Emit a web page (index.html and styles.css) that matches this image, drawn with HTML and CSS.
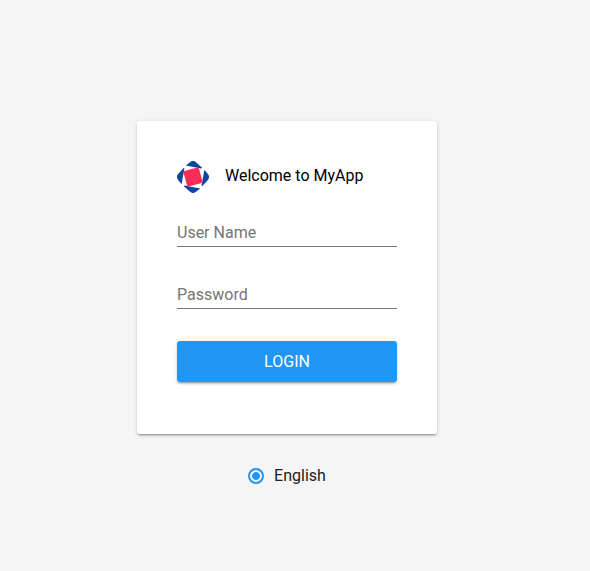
FILE: index.html
```html
<!DOCTYPE html>
<html lang="en">
<head>
<meta charset="utf-8">
<title>MyApp</title>
<link rel="stylesheet" href="styles.css">
</head>
<body>
<main class="page">
  <form class="card">
    <header class="brand">
      <svg class="logo" viewBox="0 0 32 32" aria-hidden="true">
        <g fill="#0d47a1">
          <path id="wing" d="M8.800 4.600 L13.300 .9 Q16 -1 18.700 .9 L24.900 6.600 Q25.200 7.600 24.200 7.400 Z"/>
          <use href="#wing" transform="rotate(90 16 16)"/>
          <use href="#wing" transform="rotate(180 16 16)"/>
          <use href="#wing" transform="rotate(270 16 16)"/>
        </g>
        <rect x="8" y="8" width="16" height="16" rx="2" fill="#fa2b56" transform="rotate(-15 16 16)"/>
      </svg>
      <h1 class="title">Welcome to MyApp</h1>
    </header>
    <input class="field" type="text" placeholder="User Name" aria-label="User Name">
    <input class="field" type="password" placeholder="Password" aria-label="Password">
    <button class="login" type="button">LOGIN</button>
  </form>
  <label class="language"><input class="radio" type="radio" checked><span>English</span></label>
</main>
</body>
</html>
```
FILE: styles.css
```css
* { box-sizing: border-box; }
body { margin: 0; background: #f5f5f5; font: 16px/24px Roboto, sans-serif; color: #212121; }
.page { width: 574px; padding-top: 121px; display: flex; flex-direction: column; align-items: center; }
.card, .login { border-radius: 3px; box-shadow: 0 3px 1px -2px rgba(0,0,0,.2), 0 2px 2px rgba(0,0,0,.14), 0 1px 5px rgba(0,0,0,.12); }
.card { width: 300px; height: 313px; padding: 40px; display: flex; flex-direction: column; background: #fff; }
.brand { display: flex; align-items: center; gap: 16px; height: 32px; margin-bottom: 26px; }
.logo { width: 32px; height: 32px; }
.title { margin: 0 0 3px; font-size: 16px; font-weight: 400; color: #000; }
.field { height: 28px; margin: 0 0 34px; padding: 0; border: 0; border-bottom: 1px solid #757575; border-radius: 0; font: inherit; background: none; outline: 0; }
.field::placeholder { color: #757575; opacity: 1; }
.login { height: 41px; margin-top: -2px; padding: 0; border: 0; background: #2196f3; color: #fff; font: inherit; }
.language { display: flex; align-items: center; gap: 10px; margin-top: 30px; }
.radio { appearance: none; width: 16px; height: 16px; margin: 0; border: 2px solid #2196f3; border-radius: 50%; background: radial-gradient(circle, #2196f3 3.600px, transparent 4.200px); }
```
